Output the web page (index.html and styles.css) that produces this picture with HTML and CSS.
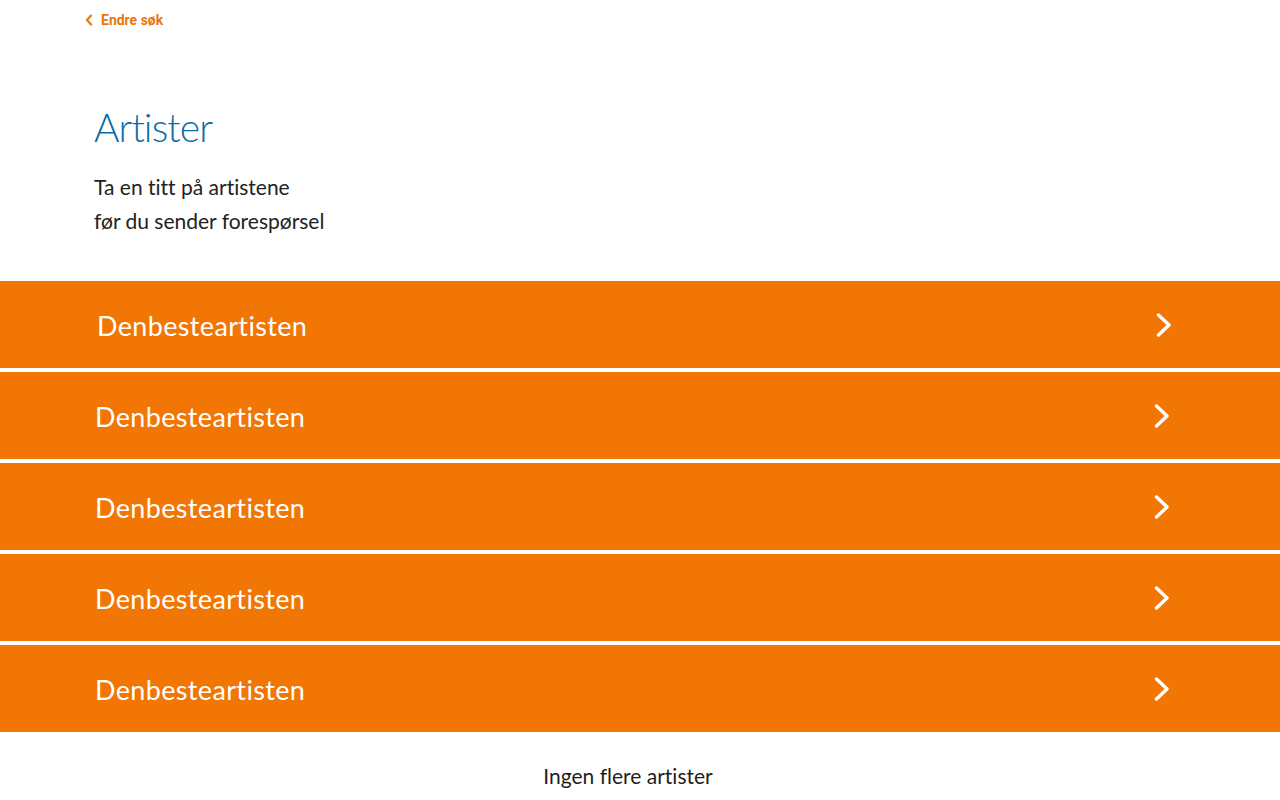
FILE: index.html
```html
<!DOCTYPE html>
<html lang="no">
<head>
<meta charset="utf-8">
<title>Artister</title>
<link rel="stylesheet" href="styles.css">
</head>
<body>
<nav class="topbar">
  <a class="back" href="#">
    <svg class="back-icon" width="8" height="12" viewBox="0 0 8 12"><path d="M6 1.5 L2 6 L6 10.5" fill="none" stroke="#e8780c" stroke-width="2.2" stroke-linecap="round" stroke-linejoin="round"/></svg>
    <span>Endre søk</span>
  </a>
</nav>
<header class="intro">
  <h1 class="title">Artister</h1>
  <p class="lead">Ta en titt på artistene<br>før du sender forespørsel</p>
</header>
<ul class="list">
  <li class="row row--first"><span class="name">Denbesteartisten</span><svg class="chev" width="16" height="24" viewBox="0 0 16 24"><path d="M2.5 2 L13 12 L2.5 22" fill="none" stroke="#fff" stroke-width="3.4" stroke-linecap="round" stroke-linejoin="round"/></svg></li>
  <li class="row"><span class="name">Denbesteartisten</span><svg class="chev" width="16" height="24" viewBox="0 0 16 24"><path d="M2.5 2 L13 12 L2.5 22" fill="none" stroke="#fff" stroke-width="3.4" stroke-linecap="round" stroke-linejoin="round"/></svg></li>
  <li class="row"><span class="name">Denbesteartisten</span><svg class="chev" width="16" height="24" viewBox="0 0 16 24"><path d="M2.5 2 L13 12 L2.5 22" fill="none" stroke="#fff" stroke-width="3.4" stroke-linecap="round" stroke-linejoin="round"/></svg></li>
  <li class="row"><span class="name">Denbesteartisten</span><svg class="chev" width="16" height="24" viewBox="0 0 16 24"><path d="M2.5 2 L13 12 L2.5 22" fill="none" stroke="#fff" stroke-width="3.4" stroke-linecap="round" stroke-linejoin="round"/></svg></li>
  <li class="row"><span class="name">Denbesteartisten</span><svg class="chev" width="16" height="24" viewBox="0 0 16 24"><path d="M2.5 2 L13 12 L2.5 22" fill="none" stroke="#fff" stroke-width="3.4" stroke-linecap="round" stroke-linejoin="round"/></svg></li>
</ul>
<p class="end">Ingen flere artister</p>
</body>
</html>
```
FILE: styles.css
```css
* { box-sizing: border-box; }
html, body { margin: 0; padding: 0; background: #fff; }
body { font-family: Lato, "Open Sans", sans-serif; color: #1e1e1e; font-variant-ligatures: none; }

.topbar { height: 40px; padding-left: 85px; display: flex; align-items: center; }
.back { display: flex; align-items: center; gap: 8px; text-decoration: none; color: #e8780c; font-family: Roboto, sans-serif; font-weight: 700; font-size: 14px; }
.back-icon { display: block; }

.intro { padding: 0 94px; }
.title { margin: 63px 0 0; font-weight: 300; font-size: 39px; line-height: 48px; letter-spacing: -0.9px; color: #0b6ca6; }
.lead { margin: 19px 0 0; font-size: 21px; line-height: 34px; font-weight: 400; color: #222; }

.list { list-style: none; margin: 43px 0 0; padding: 0; display: flex; flex-direction: column; gap: 4px; }
.row { height: 87px; background: #f17604; display: flex; align-items: center; justify-content: space-between; padding: 0 110px 0 95px; color: #fff; }
.row--first { padding-left: 97px; padding-right: 108px; }
.name { font-size: 27px; line-height: 32px; padding-top: 2px; letter-spacing: 0.35px; font-weight: 400; }
.chev { display: block; }

.end { margin: 32px 0 0; text-align: center; font-size: 21px; line-height: 24px; padding-right: 24px; }
```
